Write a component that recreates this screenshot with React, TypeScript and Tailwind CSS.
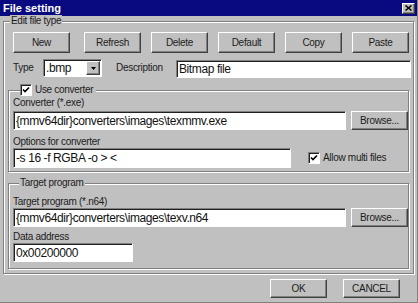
import React from "react";

const raised =
  "border border-t-white border-l-white border-r-[#404040] border-b-[#404040] shadow-[inset_-1px_-1px_0_#808080] bg-[#c0c0c0]";
const sunken =
  "border border-t-[#808080] border-l-[#808080] border-r-white border-b-white shadow-[inset_1px_1px_0_#202020] bg-white";
const etched = "border border-[#808080] shadow-[inset_1px_1px_0_#fff,1px_1px_0_#fff]";
const label = "text-[10px] leading-[12px] tracking-[-0.3px] text-[#1c1c1c]";

function Button({ children, className = "" }: { children: React.ReactNode; className?: string }) {
  return (
    <div className={`${raised} flex items-center justify-center ${label} ${className}`}>{children}</div>
  );
}

function Field({ value, className = "" }: { value: string; className?: string }) {
  return (
    <div
      className={`${sunken} flex items-center pl-[2px] text-[12px] tracking-[-0.4px] text-[#111] whitespace-nowrap overflow-hidden ${className}`}
    >
      {value}
    </div>
  );
}

function Check({ text }: { text: string }) {
  return (
    <div className="flex items-center gap-[3px] bg-[#c0c0c0] pr-[3px]">
      <div className={`${sunken} w-[12px] h-[12px] flex items-center justify-center`}>
        <svg width="8" height="8" viewBox="0 0 8 8">
          <path d="M1 3.5 L3 5.5 L7 1.5" stroke="#000" strokeWidth="1.6" fill="none" />
        </svg>
      </div>
      <span className={label}>{text}</span>
    </div>
  );
}

export default function App() {
  return (
    <div
      className="w-[418px] h-[303px] bg-[#c0c0c0] flex flex-col overflow-hidden border-r border-b border-[#808080]"
      style={{ fontFamily: '"Liberation Sans", Arial, sans-serif' }}
    >
      {/* title bar */}
      <div className="h-[16px] shrink-0 bg-[#0a0a80] flex items-center justify-between pl-[3px] pr-[2px]">
        <span className="text-white font-bold text-[11px] leading-none">File setting</span>
        <div className={`${raised} w-[13px] h-[11px] flex items-center justify-center`}>
          <svg width="7" height="6" viewBox="0 0 7 6">
            <path d="M0.5 0.5 L6.5 5.5 M6.5 0.5 L0.5 5.5" stroke="#000" strokeWidth="1.5" />
          </svg>
        </div>
      </div>

      <div className="flex flex-col pl-[3px] pt-[5px]">
        {/* Edit file type */}
        <div className={`relative ${etched} w-[411px] h-[253px] pl-[9px] pt-[10px] flex flex-col`}>
          <span className={`absolute left-[6px] top-[-7px] px-[1px] bg-[#c0c0c0] ${label}`}>Edit file type</span>

          <div className="flex gap-[10px]">
            {["New", "Refresh", "Delete", "Default", "Copy", "Paste"].map((b, i) => (
              <Button key={b} className={`w-[57px] h-[21px] ${i === 0 ? "mr-[4px]" : ""}`}>
                {b}
              </Button>
            ))}
          </div>

          <div className="flex items-center mt-[6px] h-[18px]">
            <span className={`${label} w-[30px]`}>Type</span>
            <div className={`${sunken} w-[59px] h-[18px] flex items-center justify-between pl-[2px] pr-[1px]`}>
              <span className="text-[12px] tracking-[-0.4px] text-[#111]">.bmp</span>
              <div className={`${raised} w-[14px] h-[14px] flex items-center justify-center`}>
                <svg width="5" height="3" viewBox="0 0 5 3">
                  <path d="M0 0 H5 L2.5 3 Z" fill="#000" />
                </svg>
              </div>
            </div>
            <span className={`${label} ml-[14px] w-[60px]`}>Description</span>
            <Field value="Bitmap file" className="w-[235px] h-[18px] mt-[1px]" />
          </div>

          {/* Use converter */}
          <div className={`relative ${etched} ml-[-5px] mt-[13px] w-[401px] h-[82px] pl-[4px] pt-[6px] flex flex-col`}>
            <div className="absolute left-[11px] top-[-7px]">
              <Check text="Use converter" />
            </div>
            <span className={label}>Converter (*.exe)</span>
            <div className="flex gap-[5px] mt-[2px]">
              <Field value="{mmv64dir}converters\images\texmmv.exe" className="w-[333px] h-[19px]" />
              <Button className="w-[57px] h-[19px]">Browse...</Button>
            </div>
            <span className={`${label} mt-[6px]`}>Options for converter</span>
            <div className="flex items-center">
              <Field value="-s 16 -f RGBA -o > <" className="w-[278px] h-[20px]" />
              <div className="ml-[17px]">
                <Check text="Allow multi files" />
              </div>
            </div>
          </div>

          {/* Target program */}
          <div className={`relative ${etched} ml-[-5px] mt-[11px] w-[401px] h-[86px] pl-[4px] pt-[12px] flex flex-col`}>
            <span className={`absolute left-[10px] top-[-7px] px-[1px] bg-[#c0c0c0] ${label}`}>Target program</span>
            <span className={label}>Target program (*.n64)</span>
            <div className="flex gap-[5px]">
              <Field value="{mmv64dir}converters\images\texv.n64" className="w-[333px] h-[19px]" />
              <Button className="w-[57px] h-[19px]">Browse...</Button>
            </div>
            <span className={`${label} mt-[4px]`}>Data address</span>
            <Field value="0x00200000" className="w-[120px] h-[19px]" />
          </div>
        </div>

        <div className="flex justify-end gap-[16px] mt-[5px] pr-[17px]">
          <Button className="w-[57px] h-[19px]">OK</Button>
          <Button className="w-[57px] h-[19px]">CANCEL</Button>
        </div>
      </div>
    </div>
  );
}
